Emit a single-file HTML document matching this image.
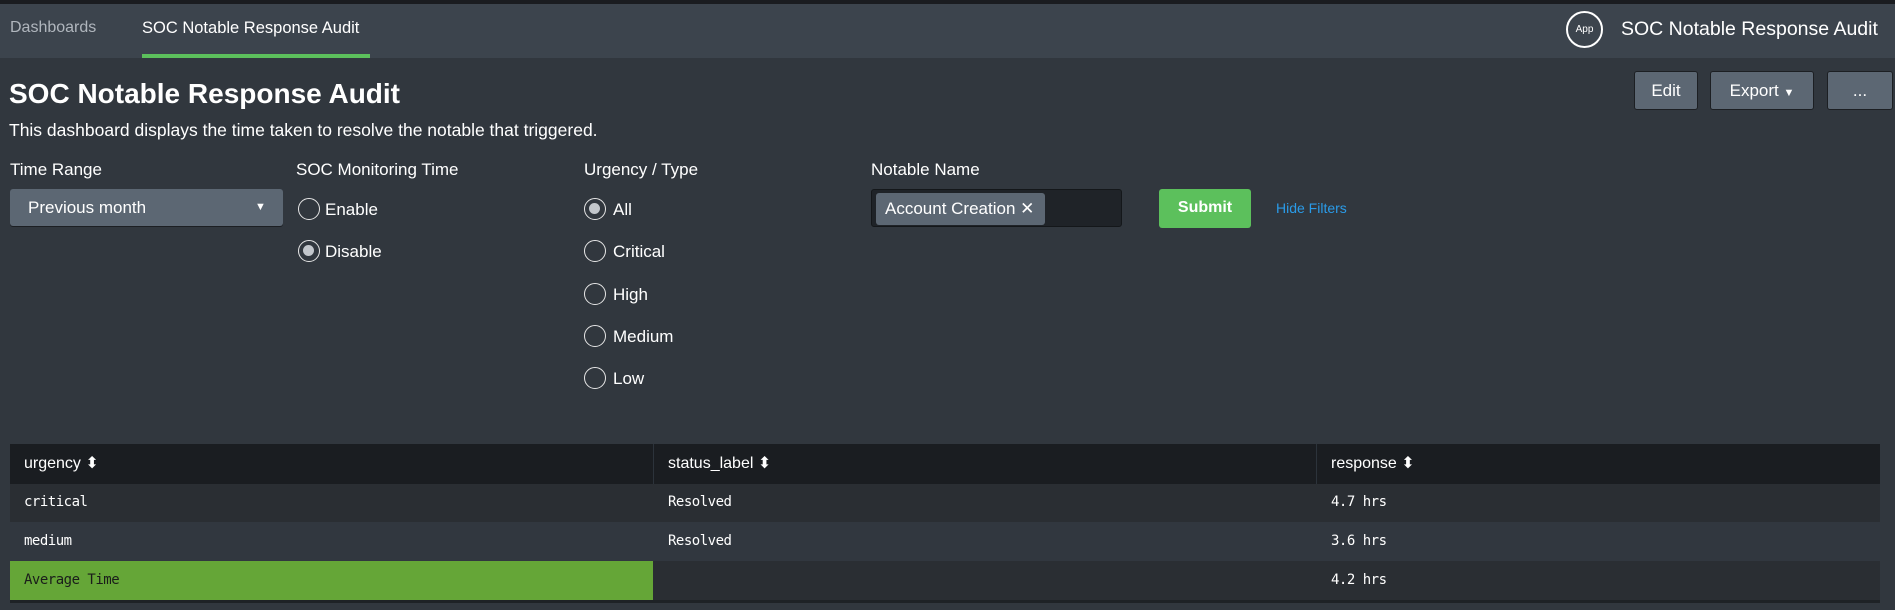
<!DOCTYPE html>
<html><head><style>
*{margin:0;padding:0;box-sizing:border-box}
body{width:1895px;height:610px;background:#31373e;font-family:"Liberation Sans",sans-serif;color:#fff;position:relative;overflow:hidden}
.a{position:absolute;white-space:nowrap}
.top{left:0;top:0;width:1895px;height:4px;background:#1a1c20}
.nav{left:0;top:4px;width:1895px;height:54px;background:#3c444d}
.lbl{font-size:17px;color:#fff}
.radio{width:22px;height:22px;border:1.5px solid #e6e6e6;border-radius:50%}
.radio.on::after{content:"";position:absolute;left:4px;top:4px;width:11px;height:11px;border-radius:50%;background:#c3c7cc}
.rt{font-size:17px}
.btn{background:#5c6773;border:1px solid #1c1f23;border-radius:3px;font-size:17px;text-align:center;line-height:37px;height:39px}
.mono{font-family:"DejaVu Sans Mono",monospace;font-size:14px;letter-spacing:-0.5px}
</style></head><body>
<div class="a top"></div>
<div class="a nav"></div>
<div class="a" style="left:10px;top:19px;font-size:16px;color:#b0b6bd">Dashboards</div>
<div class="a" style="left:142px;top:19px;font-size:16.5px;color:#fff">SOC Notable Response Audit</div>
<div class="a" style="left:142px;top:54px;width:228px;height:4px;background:#5cc05c"></div>
<div class="a" style="left:1566px;top:11px;width:37px;height:37px;border:2px solid #fff;border-radius:50%;font-size:10px;text-align:center;line-height:33px">App</div>
<div class="a" style="left:1621px;top:18px;font-size:19.5px">SOC Notable Response Audit</div>

<div class="a" style="left:9px;top:78px;font-size:28px;font-weight:bold">SOC Notable Response Audit</div>
<div class="a" style="left:9px;top:120px;font-size:17.5px">This dashboard displays the time taken to resolve the notable that triggered.</div>
<div class="a btn" style="left:1634px;top:71px;width:64px">Edit</div>
<div class="a btn" style="left:1710px;top:71px;width:104px">Export <span style="font-size:11px">▼</span></div>
<div class="a btn" style="left:1827px;top:71px;width:66px">...</div>

<div class="a lbl" style="left:10px;top:160px">Time Range</div>
<div class="a" style="left:10px;top:189px;width:273px;height:37px;background:#5c6773;border-radius:3px;box-shadow:0 1px 0 #1c1f23"><span class="a" style="left:18px;top:9px;font-size:17px">Previous month</span><span class="a" style="left:245px;top:12px;font-size:11px">▼</span></div>

<div class="a lbl" style="left:296px;top:160px">SOC Monitoring Time</div>
<div class="a radio" style="left:298px;top:198px"></div><div class="a rt" style="left:325px;top:200px">Enable</div>
<div class="a radio on" style="left:298px;top:240px"></div><div class="a rt" style="left:325px;top:242px">Disable</div>

<div class="a lbl" style="left:584px;top:160px">Urgency / Type</div>
<div class="a radio on" style="left:584px;top:198px"></div><div class="a rt" style="left:613px;top:200px">All</div>
<div class="a radio" style="left:584px;top:240px"></div><div class="a rt" style="left:613px;top:242px">Critical</div>
<div class="a radio" style="left:584px;top:283px"></div><div class="a rt" style="left:613px;top:285px">High</div>
<div class="a radio" style="left:584px;top:325px"></div><div class="a rt" style="left:613px;top:327px">Medium</div>
<div class="a radio" style="left:584px;top:367px"></div><div class="a rt" style="left:613px;top:369px">Low</div>

<div class="a lbl" style="left:871px;top:160px">Notable Name</div>
<div class="a" style="left:871px;top:189px;width:251px;height:38px;background:#1f2328;border:1px solid #14171a;border-radius:3px"></div>
<div class="a" style="left:876px;top:193px;width:169px;height:32px;background:#5c6773;border-radius:3px;font-size:17px;line-height:32px;padding-left:9px">Account Creation ✕</div>
<div class="a" style="left:1159px;top:189px;width:92px;height:39px;background:#5cc05c;border-radius:3px;font-size:16px;font-weight:bold;text-align:center;line-height:38px">Submit</div>
<div class="a" style="left:1276px;top:200px;font-size:14px;color:#2a9be8">Hide Filters</div>

<div class="a" style="left:10px;top:444px;width:1870px;height:40px;background:#1a1d21"></div>
<div class="a" style="left:653px;top:444px;width:1px;height:40px;background:#2c333b"></div>
<div class="a" style="left:1316px;top:444px;width:1px;height:40px;background:#2c333b"></div>
<div class="a" style="left:24px;top:453px;font-size:16px">urgency ⬍</div>
<div class="a" style="left:668px;top:453px;font-size:16px">status_label ⬍</div>
<div class="a" style="left:1331px;top:453px;font-size:16px">response ⬍</div>

<div class="a" style="left:10px;top:484px;width:1870px;height:38px;background:#2a2e33"></div>
<div class="a mono" style="left:24px;top:494px">critical</div>
<div class="a mono" style="left:668px;top:494px">Resolved</div>
<div class="a mono" style="left:1331px;top:494px">4.7 hrs</div>
<div class="a" style="left:10px;top:522px;width:1870px;height:39px;background:#31373f"></div>
<div class="a mono" style="left:24px;top:533px">medium</div>
<div class="a mono" style="left:668px;top:533px">Resolved</div>
<div class="a mono" style="left:1331px;top:533px">3.6 hrs</div>
<div class="a" style="left:10px;top:561px;width:1870px;height:39px;background:#2a2e33"></div>
<div class="a" style="left:10px;top:561px;width:643px;height:39px;background:#65a637"></div>
<div class="a mono" style="left:24px;top:572px;color:#1a1d1a">Average Time</div>
<div class="a mono" style="left:1331px;top:572px">4.2 hrs</div>
<div class="a" style="left:10px;top:600px;width:1870px;height:3px;background:#1e2226"></div>
</body></html>
